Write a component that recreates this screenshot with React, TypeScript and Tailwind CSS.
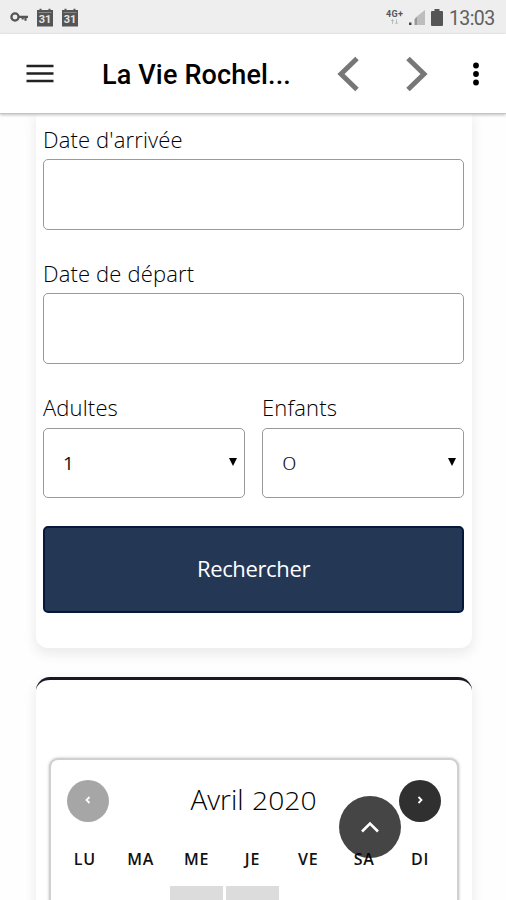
import React from "react";

const body = "font-['Open_Sans','Noto_Sans',sans-serif]";

function CalendarGlyph() {
  return (
    <svg width="18" height="20" viewBox="0 0 18 20" className="block">
      <path d="M1 2h2.500V.8h2V2h7V.8h2V2H17v16.500H1z" fill="#555" />
      <path d="M2.500 4.500h13" stroke="#888" strokeWidth="1" />
      <text x="9" y="15.400" textAnchor="middle" fontSize="11" fontWeight="700" fontFamily="Roboto, sans-serif" fill="#e4e4e4">31</text>
    </svg>
  );
}

function StatusBar() {
  return (
    <div className="flex h-[34px] shrink-0 items-center bg-[#eeeeee] pl-[10px] pr-[11px]">
      <svg width="19" height="12" viewBox="0 0 19 12">
        <circle cx="5" cy="6" r="3.6" fill="none" stroke="#555" strokeWidth="2.3" />
        <path d="M8.5 5.8H18M15.5 5.8v4M12.7 5.8v2.6" fill="none" stroke="#555" strokeWidth="2.2" />
      </svg>
      <div className="ml-[7px] mt-px flex gap-[7px]">
        <CalendarGlyph />
        <CalendarGlyph />
      </div>
      <div className="ml-auto flex items-center">
        <svg width="18" height="20" viewBox="0 0 18 20">
          <text x="0" y="10" fontSize="9" fontWeight="700" fontFamily="Roboto, sans-serif" fill="#555" textLength="17">4G+</text>
          <path d="M6.5 17v-4.500M5 14l1.500-1.500L8 14M10.500 12.500V17M9 15.500l1.500 1.500 1.500-1.500" fill="none" stroke="#bbb" />
        </svg>
        <svg width="17" height="18" viewBox="0 0 17 18" className="ml-[5px] mt-[2px]">
          <path d="M16 1v15H6v-7z" fill="#bdbdbd" />
          <path d="M5.500 10.500 8 8v8H5.500z" fill="#999" />
          <path d="M0 13.500h2.500V16H0z" fill="#444" />
        </svg>
        <svg width="12" height="18" viewBox="0 0 12 18" className="ml-[5px] mt-[2px]">
          <path d="M3.500 0h5v2H11a1 1 0 0 1 1 1v13a1 1 0 0 1-1 1H1a1 1 0 0 1-1-1V3a1 1 0 0 1 1-1h2.500z" fill="#555" />
        </svg>
        <span className="ml-[6px] mt-[3px] w-[46px] whitespace-nowrap font-[Roboto,sans-serif] text-[19.5px] leading-[34px] tracking-[-0.6px] text-[#606060]">13:03</span>
      </div>
    </div>
  );
}

function Header() {
  return (
    <header className="relative z-10 flex h-[80px] shrink-0 items-center border-b border-[#c4c4c4] bg-white shadow-[0_1px_3px_rgba(0,0,0,0.25)]">
      <svg width="28" height="22" viewBox="0 0 28 22" className="ml-[26px]">
        <path d="M.5 3h27M.5 10.500h27M.5 18h27" stroke="#222" strokeWidth="2.600" />
      </svg>
      <h1 className="ml-[48px] mt-[2px] w-[200px] whitespace-nowrap font-[Roboto,sans-serif] text-[27px] font-medium leading-[40px] tracking-[0.15px] text-black">La Vie Rochel...</h1>
      <svg width="24" height="36" viewBox="0 0 24 36" className="ml-[35px]">
        <path d="M20 2.500 4 18l16 15.500" fill="none" stroke="#777" strokeWidth="5" />
      </svg>
      <svg width="24" height="36" viewBox="0 0 24 36" className="ml-[44px]">
        <path d="M3 2.500 19 18 3 33.500" fill="none" stroke="#777" strokeWidth="5" />
      </svg>
      <svg width="8" height="24" viewBox="0 0 8 24" className="ml-[43px]">
        <circle cx="4" cy="3.500" r="2.900" />
        <circle cx="4" cy="12" r="2.900" />
        <circle cx="4" cy="20.500" r="2.900" />
      </svg>
    </header>
  );
}

function FieldLabel({ children }: { children: React.ReactNode }) {
  return <span className="block h-[40px] whitespace-nowrap text-[22px] font-light leading-[40px] tracking-[0.15px] text-black">{children}</span>;
}

function DateField({ label }: { label: string }) {
  return (
    <label className="block h-[134px]">
      <FieldLabel>{label}</FieldLabel>
      <span className="block h-[71px] rounded-[5px] border border-[#999] bg-white" />
    </label>
  );
}

function CountField({ label, value, zero }: { label: string; value: string; zero?: boolean }) {
  return (
    <label className="block w-[202px]">
      <FieldLabel>{label}</FieldLabel>
      <span className="mt-px flex h-[70px] items-center justify-between rounded-[5px] border border-[#999] bg-white pl-[19px] pr-[7px] text-[19px] text-[#111]">
        <span className={zero ? "origin-left scale-x-[1.35] font-light" : ""}>{value}</span>
        <svg width="8" height="8" viewBox="0 0 8 8" className="mb-[2px]">
          <path d="M0 0h8L4 8z" />
        </svg>
      </span>
    </label>
  );
}

const days = ["LU", "MA", "ME", "JE", "VE", "SA", "DI"];

export default function App() {
  return (
    <div className={`relative flex h-[900px] w-[506px] flex-col overflow-hidden bg-[#fefefe] ${body}`}>
      <StatusBar />
      <Header />
      <main className="flex flex-col pl-[36px] pr-[34px]">
        <section className="h-[534px] rounded-b-[12px] bg-white pl-[7px] pr-[8px] pt-[5px] shadow-[0_5px_12px_2px_rgba(0,0,0,0.07)]">
          <DateField label="Date d'arrivée" />
          <DateField label="Date de départ" />
          <div className="flex justify-between">
            <CountField label="Adultes" value="1" />
            <CountField label="Enfants" value="0" zero />
          </div>
          <button className="mt-[28px] block h-[87px] w-full rounded-[5px] border-2 border-[#06193a] bg-[#243856] pb-[3px] text-[22px] tracking-[-0.35px] text-white">Rechercher</button>
        </section>
        <section className="mt-[29px] h-[240px] rounded-t-[14px] border-t-[3px] border-[#1c1724] bg-white px-[13px] pt-[78px] shadow-[0_5px_12px_2px_rgba(0,0,0,0.07)]">
          <div className="h-[180px] rounded-t-[9px] border-2 border-[#d0d0d0] bg-white px-[6px] shadow-[0_0_3px_rgba(0,0,0,0.25)]">
            <div className="flex h-[82px] items-center justify-between px-[10px]">
              <span className="flex size-[42px] items-center justify-center rounded-full bg-[#a6a6a6]">
                <svg width="6" height="8" viewBox="0 0 6 8" className="mb-[3px]"><path d="M4.500 1 1.500 4l3 3" fill="none" stroke="white" strokeWidth="1.800" /></svg>
              </span>
              <span className="mb-[4px] mr-[2px] flex items-baseline whitespace-nowrap text-[28px] font-light text-black">
                <span>Avril</span>
                <span className="ml-[8px] inline-block w-[64px] origin-left scale-x-[1.13] text-[25px]">2020</span>
              </span>
              <span className="flex size-[42px] items-center justify-center rounded-full bg-[#303030]">
                <svg width="6" height="8" viewBox="0 0 6 8" className="mb-[3px]"><path d="m1.500 1 3 3-3 3" fill="none" stroke="white" strokeWidth="1.800" /></svg>
              </span>
            </div>
            <div className="mr-[3px] grid grid-cols-7 text-center text-[16px] font-semibold leading-[34px] tracking-[0.8px] text-[#111]">
              {days.map((d) => <span key={d}>{d}</span>)}
            </div>
            <div className="mr-[3px] mt-[10px] grid grid-cols-7 gap-x-[3px]">
              <span className="col-start-3 h-10 bg-[#dcdcdc]" />
              <span className="h-10 bg-[#dcdcdc]" />
            </div>
          </div>
        </section>
      </main>
      <button className="absolute left-[339px] top-[796px] flex size-[62px] items-center justify-center rounded-full bg-black/73">
        <svg width="20" height="12" viewBox="0 0 20 12"><path d="m2 10.500 8-8 8 8" fill="none" stroke="white" strokeWidth="2.600" /></svg>
      </button>
    </div>
  );
}
